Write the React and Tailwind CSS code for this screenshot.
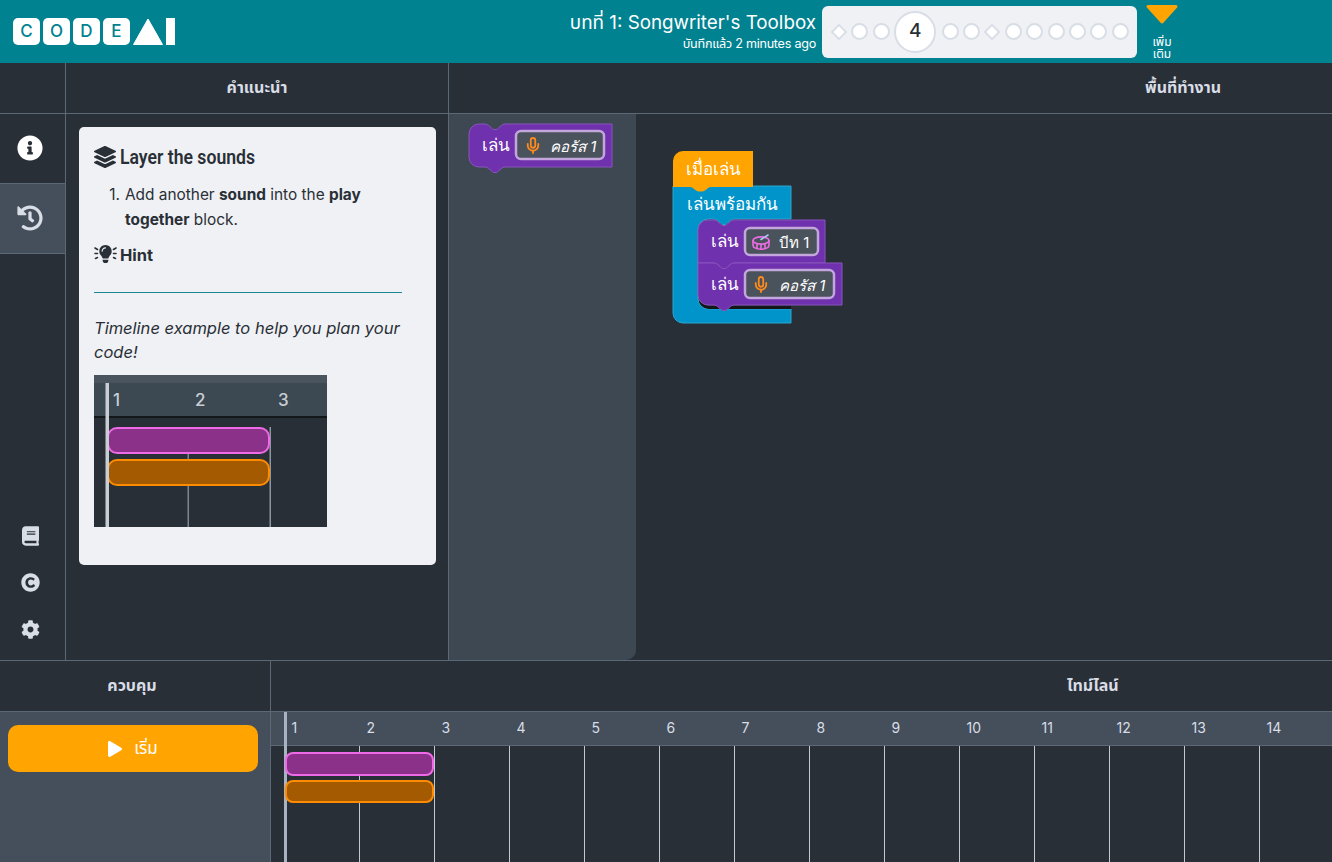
import { FaLayerGroup, FaInfoCircle, FaHistory, FaBook, FaCopyright, FaCog, FaPlay, FaLightbulb } from 'react-icons/fa';
import { Mic } from 'lucide-react';

const BASE_FONT = 'font-["Inter","Noto_Sans","Noto_Sans_Thai",sans-serif]';
const LINE = 'border-[#5c6876]';
const MEASURES = [1, 2, 3, 4, 5, 6, 7, 8, 9, 10, 11, 12, 13, 14];

function Logo() {
    return (
        <div className="flex items-center gap-[3px] ml-[13px]">
            {['C', 'O', 'D', 'E'].map(l => (
                <div key={l} className="w-[27px] h-[27px] rounded-[5px] bg-white text-[#008291] text-[17px] font-medium flex items-center justify-center">{l}</div>
            ))}
            <svg width="30" height="27" viewBox="0 0 30 27"><path d="M15 1 L29.5 26.5 H0.5 Z" fill="#fff" stroke="#fff" strokeLinejoin="round" /></svg>
            <div className="w-[9px] h-[27px] bg-white" />
        </div>
    );
}

function Bubble() {
    return <div className="w-[17px] h-[17px] rounded-full bg-white border-2 border-[#d8dde6]" />;
}

function Diamond() {
    return <div className="w-[12px] h-[12px] mx-[2px] rotate-45 bg-white border-2 border-[#d8dde6]" />;
}

function Progress() {
    return (
        <div className="w-[315px] h-[52px] rounded-[6px] bg-[#f0f1f5] flex items-center pl-[9px] gap-[4.4px]">
            <Diamond />
            <Bubble />
            <Bubble />
            <div className="w-[42px] h-[52px] mr-[1px] flex items-center justify-center">
                <div className="w-[42px] h-[42px] rounded-full bg-white border-2 border-[#d8dde6] text-[#292f36] text-[19px] font-medium flex items-center justify-center">4</div>
            </div>
            <Bubble />
            <Bubble />
            <Diamond />
            <Bubble />
            <Bubble />
            <Bubble />
            <Bubble />
            <Bubble />
            <Bubble />
        </div>
    );
}

function TopBar() {
    return (
        <div className="h-[63px] bg-[#008291] flex items-center shrink-0">
            <Logo />
            <div className="ml-auto flex items-center">
                <div className="text-right text-white mr-[6px]">
                    <div className="text-[18.8px] leading-[24px] -mt-[1px]">บทที่ 1: Songwriter's Toolbox</div>
                    <div className="text-[12.6px] leading-[16px] tracking-[-0.25px] mt-[1px]">บันทึกแล้ว 2 minutes ago</div>
                </div>
                <Progress />
                <div className="w-[50px] mr-[145px] flex flex-col items-center text-white text-[12px] leading-[12px] pt-[1px]">
                    <svg width="32" height="19" viewBox="0 0 32 19" className="mb-[12px]"><path d="M2 1.5 H30 L16 17 Z" fill="#ffa400" stroke="#ffa400" strokeWidth="3" strokeLinejoin="round" /></svg>
                    <div>เพิ่ม</div>
                    <div>เติม</div>
                </div>
            </div>
        </div>
    );
}

function Sidebar() {
    return (
        <div className={`w-[66px] shrink-0 border-r ${LINE} flex flex-col text-[#d8dde6]`}>
            <div className={`h-[51px] border-b ${LINE}`} />
            <div className="h-[69px] pb-[2px] pr-[5px] flex items-center justify-center">
                <FaInfoCircle className="w-[26px] h-[26px] text-white" />
            </div>
            <div className={`h-[71px] pb-[2px] pr-[5px] bg-[#454f5b] border-y ${LINE} flex items-center justify-center`}>
                <FaHistory className="w-[26px] h-[26px]" />
            </div>
            <div className="mt-auto pb-[21px] pr-[5px] flex flex-col items-center">
                <FaBook className="w-[17px] h-[20px] mb-[27px]" />
                <FaCopyright className="w-[19px] h-[19px] mb-[28px]" />
                <FaCog className="w-[19px] h-[19px]" />
            </div>
        </div>
    );
}

function TimelineExample() {
    return (
        <svg width="233" height="152" viewBox="0 0 233 152" className="block">
            <rect width="233" height="152" fill="#292f36" />
            <rect width="233" height="8" fill="#4a545e" />
            <rect y="8" width="233" height="33" fill="#3c4852" />
            <rect y="41" width="233" height="2" fill="#14171a" />
            <rect x="93.5" y="52" width="1.5" height="100" fill="#7d8690" />
            <rect x="175.5" y="52" width="1.5" height="100" fill="#8d959e" />
            <rect x="14" y="53" width="161" height="25" rx="9" fill="#8c318a" stroke="#ef6ae6" strokeWidth="2" />
            <rect x="14" y="85" width="161" height="25" rx="9" fill="#a35a00" stroke="#ff8c00" strokeWidth="2" />
            <rect x="11.5" y="8" width="3.5" height="144" fill="#c9ced4" />
            <g fill="#c9ced4" fontSize="17" fontFamily="Inter, sans-serif" fontWeight="500">
                <text x="19" y="31">1</text>
                <text x="101" y="31">2</text>
                <text x="184" y="31">3</text>
            </g>
        </svg>
    );
}

function InstructionCard() {
    return (
        <div className="flex-1 min-w-0 flex flex-col">
            <div className={`h-[51px] pb-[2px] border-b ${LINE} flex items-center justify-center text-[16px] font-bold text-[#d8dde6]`}>คำแนะนำ</div>
            <div className="mt-[13px] ml-[13px] w-[357px] h-[438px] rounded-[5px] bg-[#f0f1f5] text-[#292f36] pl-[15px] pt-[17px]">
                <div className='flex items-center gap-[4px] h-[26px] font-["Roboto",sans-serif] font-semibold text-[20.5px]'>
                    <FaLayerGroup className="w-[22px] h-[22px]" />
                    <span className="inline-block origin-left scale-x-[0.86] whitespace-nowrap">Layer the sounds</span>
                </div>
                <ol className="mt-[12px] text-[15.4px] leading-[25px]">
                    <li className="flex w-[290px]">
                        <span className="w-[31px] text-right pr-[5px] shrink-0">1.</span>
                        <span>Add another <b>sound</b> into the <b>play together</b> block.</span>
                    </li>
                </ol>
                <div className="mt-[11px] flex items-center gap-[3px] h-[24px] text-[16.5px] font-bold">
                    <svg width="23" height="22" viewBox="0 0 23 22" fill="none" stroke="#292f36" strokeWidth="1.6" strokeLinecap="round">
                        <path d="M1 4 L3.5 5.5 M1 9.5 H3.5 M1.5 14.5 L3.5 13.5 M22 4 L19.5 5.5 M22 9.5 H19.5 M21.5 14.5 L19.5 13.5" />
                        <FaLightbulb x={2.5} y={1} size={18} color="#292f36" stroke="none" />
                    </svg>
                    <span>Hint</span>
                </div>
                <div className="mt-[25px] w-[308px] border-t border-[#1a8795]" />
                <p className="mt-[23px] w-[320px] text-[16.5px] leading-[24px] italic">Timeline example to help you plan your code!</p>
                <div className="mt-[11px]"><TimelineExample /></div>
            </div>
        </div>
    );
}

// notch is 20px wide, 5.5px deep
const NOTCH_DOWN = 'c1.5 0 2.5 0.6 3.5 1.4 l3 2.6 c0.8 0.8 1.6 1.5 2.5 1.5 h2 c0.9 0 1.7 -0.7 2.5 -1.5 l3 -2.6 c1 -0.8 2 -1.4 3.5 -1.4';
const NOTCH_UP = 'c-1.5 0 -2.5 0.6 -3.5 1.4 l-3 2.6 c-0.8 0.8 -1.6 1.5 -2.5 1.5 h-2 c-0.9 0 -1.7 -0.7 -2.5 -1.5 l-3 -2.6 c-1 -0.8 -2 -1.4 -3.5 -1.4';

function Block({ x, y, w, h, flatTop, flatBottom }) {
    const top = flatTop ? `M${x} ${y} h16` : `M${x} ${y + 10} a10 10 0 0 1 10 -10 h6`;
    const bottom = flatBottom ? `H${x}` : `h-6 a10 10 0 0 1 -10 -10`;
    const d = `${top} ${NOTCH_DOWN} H${x + w} V${y + h} H${x + 36} ${NOTCH_UP} ${bottom} Z`;
    return <path d={d} fill="#6f31ad" stroke="#8a55bd" strokeWidth="1" />;
}

function Field({ x, y, w, h }) {
    return <rect x={x + 1} y={y + 1} width={w - 2} height={h - 2} rx="5" fill="#4a525c" stroke="#c3a6dc" strokeWidth="2.5" />;
}

function Label({ x, y, size = 17, italic, children }) {
    return <text x={x} y={y} fontSize={size} fill="#fff" fontStyle={italic ? 'italic' : 'normal'} fontFamily="Inter, 'Noto Sans', sans-serif">{children}</text>;
}

function DrumIcon({ x, y }) {
    return (
        <g transform={`translate(${x} ${y})`} fill="none" stroke="#f06ce6" strokeWidth="1.6" strokeLinecap="round">
            <ellipse cx="9" cy="6.5" rx="8" ry="3.6" />
            <path d="M1 6.5 V11.5 C1 13.6 4.6 15.2 9 15.2 S17 13.6 17 11.5 V6.5" />
            <path d="M5 10 V14.6 M9 10.6 V15 M13 10 V14.6" />
            <path d="M9 5.5 L16 1" stroke="#a9c8f0" />
        </g>
    );
}

function Toolbox() {
    return (
        <svg viewBox="449 114 187 60" width="187" height="60" className="absolute left-0 top-0">
            <Block x={469} y={124} w={143} h={43} />
            <Label x={482} y={151}>เล่น</Label>
            <Field x={515} y={130} w={90} h={30} />
            <Mic x={524} y={136} width={18} height={19} color="#ff8c1a" strokeWidth={2.4} />
            <Label x={550} y={152} size={15} italic>คอรัส 1</Label>
        </svg>
    );
}

function WorkspaceBlocks() {
    return (
        <svg viewBox="636 114 696 546" width="696" height="546" className="absolute left-[187px] top-0">
            {/* play together wrapper */}
            <path d={`M673 186 H791 V219 H734 ${NOTCH_UP} H708 a10 10 0 0 0 -10 10 V299 a10 10 0 0 0 10 10 H791 V323 H683 a10 10 0 0 1 -10 -10 Z`} fill="#0094ca" stroke="#2aa7d0" strokeWidth="1" />
            <path d="M699 296 a10 10 0 0 0 10 10 H791 V309 H709 a10 10 0 0 1 -10 -10 Z" fill="#14171a" />
            {/* when run hat */}
            <path d="M673 187 V161 a10 10 0 0 1 10 -10 H753 V187 H711 c-2 0 -3 1 -4 2 l-2 1.6 c-1 0.7 -2 1 -3 1 h-3 c-1 0 -2 -0.3 -3 -1 l-2 -1.6 c-1 -1 -2 -2 -4 -2 Z" fill="#ffa400" />
            <Label x={686} y={175}>เมื่อเล่น</Label>
            <Label x={687} y={210}>เล่นพร้อมกัน</Label>

            <Block x={698} y={220} w={127} h={43} flatBottom />
            <Label x={711} y={247}>เล่น</Label>
            <Field x={744} y={227} w={75} h={29} />
            <DrumIcon x={752} y={234} />
            <Label x={779} y={248} size={15}>บีท 1</Label>

            <Block x={698} y={263} w={144} h={42} flatTop />
            <Label x={711} y={290}>เล่น</Label>
            <Field x={744} y={269} w={91} h={30} />
            <Mic x={752} y={275} width={18} height={19} color="#ff8c1a" strokeWidth={2.4} />
            <Label x={779} y={291} size={15} italic>คอรัส 1</Label>
        </svg>
    );
}

function Workspace() {
    return (
        <div className="w-[883px] shrink-0 flex flex-col">
            <div className={`h-[51px] pb-[2px] border-b ${LINE} flex items-center pl-[696px] text-[16px] font-bold text-[#d8dde6]`}>พื้นที่ทำงาน</div>
            <div className="flex-1 relative">
                <div className="w-[187px] h-full bg-[#3e4852] rounded-br-[10px]" />
                <Toolbox />
                <WorkspaceBlocks />
            </div>
        </div>
    );
}

function Controls() {
    return (
        <div className={`w-[271px] shrink-0 border-r ${LINE} flex flex-col`}>
            <div className={`h-[51px] pb-[2px] border-b ${LINE} flex items-center justify-center pr-[6px] text-[16px] font-bold text-[#d8dde6]`}>ควบคุม</div>
            <div className="flex-1 bg-[#454f5b] pl-[8px] pt-[13px]">
                <button className="w-[250px] h-[47px] rounded-[10px] bg-[#ffa400] text-white text-[17px] flex items-center justify-center gap-[12px]">
                    <FaPlay className="w-[14px] h-[16px]" />
                    <span>เริ่ม</span>
                </button>
            </div>
        </div>
    );
}

function Timeline() {
    return (
        <div className="flex-1 min-w-0 flex flex-col overflow-hidden">
            <div className={`h-[51px] pb-[2px] shrink-0 border-b ${LINE} flex items-center pl-[796px] text-[16px] font-bold text-[#d8dde6]`}>ไทม์ไลน์</div>
            <div className="flex-1 relative">
                <div className={`h-[34px] bg-[#454f5b] border-b ${LINE} flex pl-[14px]`}>
                    {MEASURES.map(n => (
                        <div key={n} className="w-[75px] shrink-0 pl-[6.5px] text-[14px] leading-[32px] text-[#d8dde6]">{n}</div>
                    ))}
                </div>
                <div className="h-[117px] flex pl-[14px]">
                    {MEASURES.map(n => (
                        <div key={n} className="w-[75px] shrink-0 border-r border-[#c3c9d1]" />
                    ))}
                </div>
                <div className="absolute left-[13px] top-0 bottom-0 w-[3px] bg-[#a9b4c2]" />
                <div className="absolute left-[14px] top-[40px] w-[149px] h-[24px] rounded-[8px] bg-[#8c318a] border-2 border-[#ef6ae6]" />
                <div className="absolute left-[14px] top-[68px] w-[149px] h-[23px] rounded-[8px] bg-[#a35a00] border-2 border-[#ff8c00]" />
            </div>
        </div>
    );
}

export default function App() {
    return (
        <div className={`w-[1332px] h-[862px] overflow-hidden flex flex-col bg-[#292f36] ${BASE_FONT}`}>
            <TopBar />
            <div className={`h-[598px] shrink-0 flex border-b ${LINE}`}>
                <Sidebar />
                <div className={`w-[383px] shrink-0 border-r ${LINE} flex`}>
                    <InstructionCard />
                </div>
                <Workspace />
            </div>
            <div className="flex-1 flex min-h-0">
                <Controls />
                <Timeline />
            </div>
        </div>
    );
}
